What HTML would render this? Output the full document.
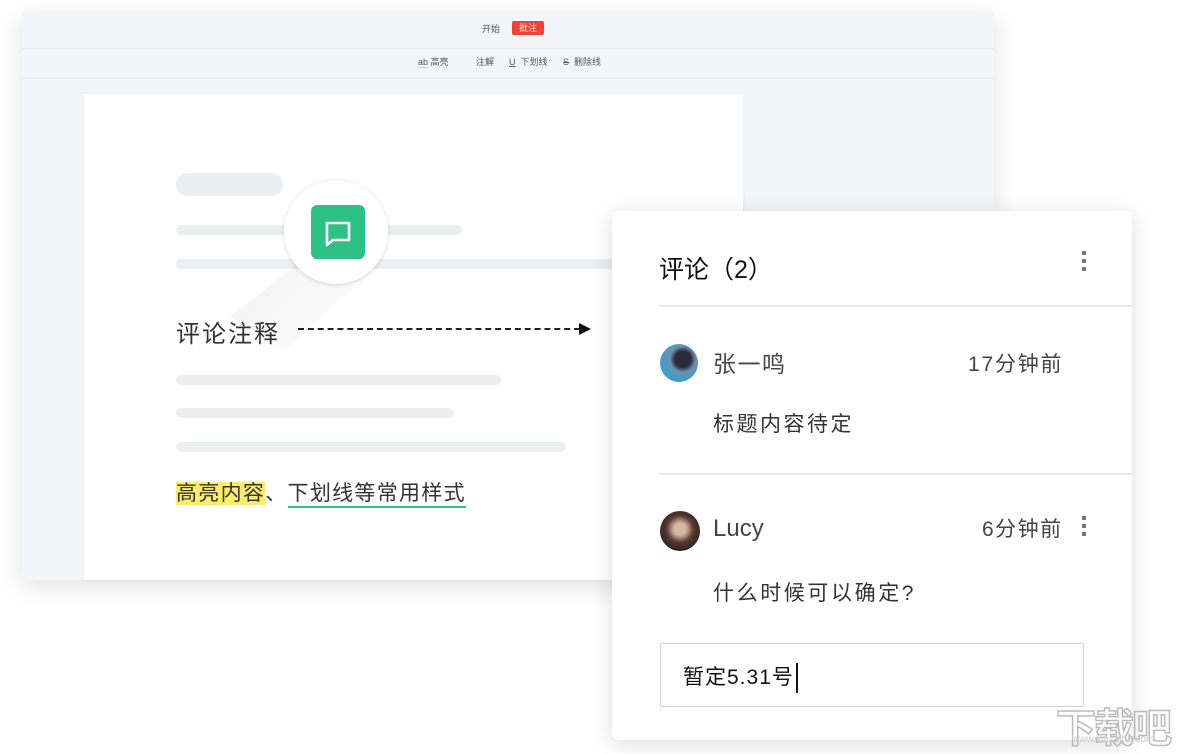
<!DOCTYPE html>
<html><head><meta charset="utf-8"><style>
body{margin:0;width:1186px;height:746px;background:#fff;position:relative;overflow:hidden;font-family:"Liberation Sans","Noto Sans CJK SC",sans-serif;}
.a{position:absolute}
.bar{position:absolute;background:#eceef0;border-radius:6px}
</style></head><body>
<div class="a" style="left:22px;top:12px;width:972px;height:568px;background:#f4f5f8;box-shadow:0 6px 24px rgba(0,0,0,0.12);border-radius:4px"></div>
<div class="a" style="left:22px;top:48px;width:972px;height:1px;background:#e6e8ec"></div>
<div class="a" style="left:22px;top:78px;width:972px;height:1px;background:#e8eaee"></div>
<div class="a" style="left:482px;top:22px;font-size:9px;color:#555">开始</div>
<div class="a" style="left:512px;top:21px;width:32px;height:14px;background:#f04134;border-radius:2px;color:#fff;font-size:9px;text-align:center;line-height:14px">批注</div>
<div class="a" style="left:418px;top:55px;font-size:9px;color:#555"><span style="border-bottom:1px solid #e8d33a">ab</span> 高亮</div>
<div class="a" style="left:476px;top:55px;font-size:9px;color:#555">注解</div>
<div class="a" style="left:509px;top:55px;font-size:9px;color:#555"><u>U</u>&nbsp; 下划线</div>
<div class="a" style="left:563px;top:55px;font-size:9px;color:#555"><s>S</s>&nbsp; 删除线</div>
<div class="a" style="left:84px;top:94px;width:659px;height:486px;background:#fff;box-shadow:0 0 4px rgba(0,0,0,0.06)"></div>
<div class="bar" style="left:176px;top:173px;width:107px;height:23px;border-radius:12px"></div>
<div class="bar" style="left:176px;top:225px;width:286px;height:10px"></div>
<div class="bar" style="left:176px;top:259px;width:440px;height:10px"></div>
<div class="a" style="left:230px;top:240px;width:140px;height:110px;background:linear-gradient(135deg,rgba(0,0,0,0.06),rgba(0,0,0,0));clip-path:polygon(70% 0,100% 30%,40% 100%,0 70%)"></div>
<div class="a" style="left:284px;top:180px;width:104px;height:104px;border-radius:50%;background:#fff;box-shadow:0 1px 4px rgba(0,0,0,0.15)"></div>
<div class="a" style="left:311px;top:205px;width:54px;height:54px;border-radius:6px;background:#2ec185"></div>
<svg class="a" style="left:311px;top:205px" width="54" height="54"><path d="M16 18h22v17H22l-6 5z" fill="none" stroke="#fff" stroke-width="2.6" stroke-linejoin="round"/></svg>
<div class="a" style="left:176px;top:314px;font-size:24px;letter-spacing:2px;color:#333">评论注释</div>
<div class="a" style="left:298px;top:328px;width:282px;border-top:2px dashed #222"></div>
<svg class="a" style="left:578px;top:322px" width="14" height="14"><path d="M1 1l12 6-12 6z" fill="#111"/></svg>
<div class="bar" style="left:176px;top:375px;width:325px;height:10px"></div>
<div class="bar" style="left:176px;top:408px;width:278px;height:10px"></div>
<div class="bar" style="left:176px;top:442px;width:390px;height:10px"></div>
<div class="a" style="left:176px;top:478px;font-size:21px;letter-spacing:1.3px;color:#333;line-height:32px"><span style="background:#fbec6a">高亮内容</span>、<span style="border-bottom:2px solid #2ec185;padding-bottom:1px">下划线等常用样式</span></div>
<div class="a" style="left:612px;top:211px;width:520px;height:529px;background:#fff;border-radius:6px;box-shadow:0 4px 22px rgba(0,0,0,0.14)"></div>
<div class="a" style="left:659px;top:250px;font-size:25px;color:#111">评论（2）</div>
<svg class="a" style="left:1080px;top:250px" width="8" height="24"><rect x="2" y="1" width="4" height="4" fill="#777"/><rect x="2" y="9" width="4" height="4" fill="#777"/><rect x="2" y="17" width="4" height="4" fill="#777"/></svg>
<div class="a" style="left:659px;top:305px;width:473px;height:2px;background:#e6e8ea"></div>
<div class="a" style="left:660px;top:344px;width:38px;height:38px;border-radius:50%;background:radial-gradient(circle at 60% 40%,#2a2a3a 25%,#6a8fb0 40%,#3aa0c8 70%)"></div>
<div class="a" style="left:713px;top:345px;font-size:23px;letter-spacing:1.5px;color:#444">张一鸣</div>
<div class="a" style="left:968px;top:348px;font-size:21px;letter-spacing:1.8px;color:#444">17分钟前</div>
<div class="a" style="left:713px;top:408px;font-size:21px;letter-spacing:2.5px;color:#333">标题内容待定</div>
<div class="a" style="left:659px;top:473px;width:473px;height:2px;background:#e6e8ea"></div>
<div class="a" style="left:660px;top:511px;width:40px;height:40px;border-radius:50%;background:radial-gradient(circle at 50% 45%,#d9b8a6 20%,#5a3a30 45%,#2c2020 75%)"></div>
<div class="a" style="left:713px;top:515px;font-size:24px;color:#444">Lucy</div>
<div class="a" style="left:982px;top:513px;font-size:21px;letter-spacing:1.5px;color:#444">6分钟前</div>
<svg class="a" style="left:1080px;top:515px" width="8" height="24"><rect x="2" y="1" width="4" height="4" fill="#777"/><rect x="2" y="9" width="4" height="4" fill="#777"/><rect x="2" y="17" width="4" height="4" fill="#777"/></svg>
<div class="a" style="left:713px;top:577px;font-size:21px;letter-spacing:2.6px;color:#333">什么时候可以确定?</div>
<div class="a" style="left:660px;top:643px;width:422px;height:62px;border:1px solid #cfd2d6;border-radius:2px"></div>
<div class="a" style="left:683px;top:661px;font-size:21px;letter-spacing:1px;color:#111">暂定5.31号<span style="display:inline-block;width:2px;height:30px;background:#111;vertical-align:middle;margin-left:2px"></span></div>
<div class="a" style="left:1056px;top:696px;font-size:40px;font-weight:bold;color:transparent;-webkit-text-stroke:1.5px #bbb;letter-spacing:-2px">下载吧</div>
<div class="a" style="left:1072px;top:734px;font-size:10px;color:#ccc">www.xiazaiba.com</div>
</body></html>
